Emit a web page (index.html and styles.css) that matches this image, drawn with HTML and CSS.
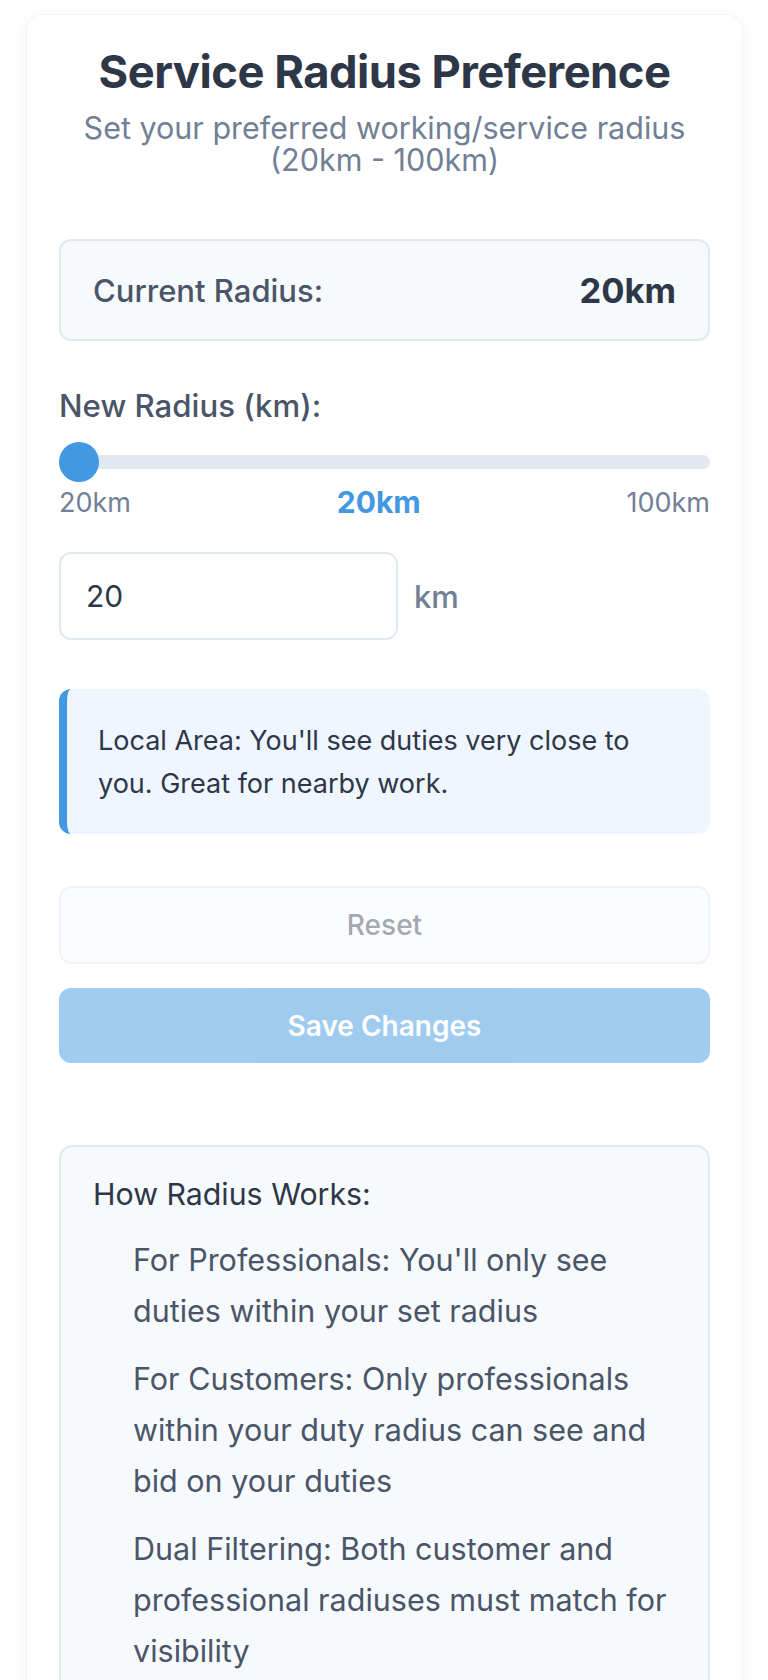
FILE: index.html
```html
<!DOCTYPE html>
<html lang="en">
<head>
<meta charset="utf-8">
<title>Service Radius Preference</title>
<link rel="stylesheet" href="styles.css">
</head>
<body>
<main class="page">
  <section class="card">
    <header class="header">
      <h1 class="title">Service Radius Preference</h1>
      <p class="subtitle">Set your preferred working/service radius (20km - 100km)</p>
    </header>

    <div class="current">
      <span class="current-label">Current Radius:</span>
      <span class="current-value">20km</span>
    </div>

    <label class="field-label" for="radius-input">New Radius (km):</label>

    <div class="slider">
      <div class="track"></div>
      <div class="thumb"></div>
    </div>
    <div class="range-labels">
      <span class="range-min">20km</span>
      <span class="range-value">20km</span>
      <span class="range-max">100km</span>
    </div>

    <div class="input-row">
      <input id="radius-input" class="radius-input" type="text" value="20">
      <span class="unit">km</span>
    </div>

    <div class="info">
      Local Area: You'll see duties very close to you. Great for nearby work.
    </div>

    <div class="actions">
      <button class="btn btn-reset" disabled>Reset</button>
      <button class="btn btn-save" disabled>Save Changes</button>
    </div>

    <div class="how">
      <h4 class="how-title">How Radius Works:</h4>
      <ul class="how-list">
        <li>For Professionals: You'll only see duties within your set radius</li>
        <li>For Customers: Only professionals within your duty radius can see and bid on your duties</li>
        <li>Dual Filtering: Both customer and professional radiuses must match for visibility</li>
      </ul>
    </div>
  </section>
</main>
</body>
</html>
```

FILE: styles.css
```css
* { box-sizing: border-box; }

html, body {
  margin: 0;
  padding: 0;
  background: #ffffff;
}

body {
  font-family: Inter, "Noto Sans", "Liberation Sans", sans-serif;
  color: #2d3748;
}

.page {
  padding: 15px 26px 0 27px;
}

.card {
  background: #ffffff;
  border-radius: 16px;
  box-shadow: 0 0 0 1px rgba(0, 0, 0, 0.025), 0 4px 18px rgba(0, 0, 0, 0.05);
  padding: 29px 32px 40px;
  display: flex;
  flex-direction: column;
}

.header {
  text-align: center;
}

.title {
  margin: 0;
  font-size: 45.3px;
  line-height: 56px;
  font-weight: 700;
  letter-spacing: -0.5px;
  color: #2d3748;
}

.subtitle {
  margin: 12px 0 0;
  font-size: 30.5px;
  line-height: 32px;
  color: #718096;
}

.current {
  margin-top: 63px;
  height: 102px;
  padding: 0 32px;
  display: flex;
  align-items: center;
  justify-content: space-between;
  background: #f7fafc;
  border: 2px solid #e2e8f0;
  border-radius: 12px;
}

.current-label {
  font-size: 31px;
  font-weight: 500;
  color: #4a5568;
}

.current-value {
  font-size: 34.5px;
  font-weight: 700;
  color: #2d3748;
}

.field-label {
  margin-top: 46px;
  font-size: 31.2px;
  line-height: 39px;
  font-weight: 500;
  color: #4a5568;
}

.slider {
  position: relative;
  margin-top: 16px;
  height: 40px;
  display: flex;
  align-items: center;
}

.track {
  flex: 1;
  height: 14px;
  border-radius: 7px;
  background: #e2e8f0;
}

.thumb {
  position: absolute;
  left: 0;
  top: 0;
  width: 40px;
  height: 40px;
  border-radius: 50%;
  background: #4299e1;
}

.range-labels {
  margin-top: 4px;
  display: flex;
  justify-content: space-between;
  align-items: center;
  font-size: 27px;
  line-height: 33px;
  color: #718096;
}

.range-value {
  font-size: 30px;
  font-weight: 700;
  color: #4299e1;
}

.input-row {
  margin-top: 33px;
  display: flex;
  align-items: center;
  gap: 16px;
}

.radius-input {
  width: 339px;
  height: 88px;
  padding: 0 25px;
  border: 2px solid #e2e8f0;
  border-radius: 12px;
  background: #ffffff;
  font-family: inherit;
  font-size: 30px;
  color: #2d3748;
  outline: none;
}

.unit {
  font-size: 31px;
  font-weight: 500;
  color: #718096;
}

.info {
  margin-top: 49px;
  padding: 30px 32px 29px 31px;
  background: #eff6ff;
  border-left: 8px solid #4299e1;
  border-radius: 12px;
  font-size: 27px;
  line-height: 43px;
  color: #2d3748;
}

.actions {
  margin-top: 52px;
  display: flex;
  flex-direction: column;
  gap: 24px;
}

.btn {
  width: 100%;
  border-radius: 12px;
  font-family: inherit;
  font-size: 28px;
  cursor: pointer;
}

.btn:disabled {
  opacity: 0.5;
  cursor: not-allowed;
}

.btn-reset {
  height: 78px;
  background: #f7fafc;
  border: 2px solid #e2e8f0;
  color: #4a5568;
  font-weight: 500;
}

.btn-save {
  height: 75px;
  background: #4299e1;
  border: none;
  color: #ffffff;
  font-weight: 600;
}

.how {
  margin-top: 82px;
  padding: 29px 32px 32px;
  background: #f7fafc;
  border: 2px solid #e2e8f0;
  border-radius: 14px;
}

.how-title {
  margin: 0;
  font-size: 30.3px;
  line-height: 36px;
  font-weight: 400;
  color: #2d3748;
}

.how-list {
  list-style: none;
  margin: 22px 0 0;
  padding: 0 0 0 40px;
}

.how-list li {
  font-size: 30.5px;
  line-height: 51px;
  color: #4a5568;
}

.how-list li + li {
  margin-top: 17px;
}
```
